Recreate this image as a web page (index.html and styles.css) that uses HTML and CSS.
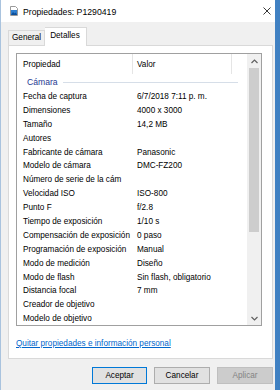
FILE: index.html
```html
<!DOCTYPE html>
<html lang="es">
<head>
    <meta charset="UTF-8">
    <meta name="viewport" content="width=device-width, initial-scale=1.0">
    <title>Propiedades: P1290419</title>
    <link rel="stylesheet" href="styles.css">
</head>
<body>

    <div class="window">
        <!-- Title bar -->
        <div class="titlebar">
            <svg class="title-icon" width="8" height="10" viewBox="0 0 8 10">
                <path d="M0.5 0.5 H5.5 L7.5 2.5 V9.5 H0.5 Z" fill="#fff" stroke="#9a9a9a"/>
                <rect x="1" y="4" width="6" height="5" fill="#2f7fd0"/>
                <path d="M1 9 L3 6 L4.5 7.5 L5.5 6.5 L7 8.5 V9 Z" fill="#0d4f9a"/>
            </svg>
            <span class="title">Propiedades: P1290419</span>
            <svg class="close" width="8" height="8" viewBox="0 0 8 8">
                <path d="M0.5 0.5 L7.5 7.5 M7.5 0.5 L0.5 7.5" stroke="#222" stroke-width="0.9"/>
            </svg>
        </div>

        <!-- Tabs -->
        <div class="tabs">
            <div class="tab">General</div>
            <div class="tab active">Detalles</div>
        </div>

        <div class="panel">
            <div class="list">
                <div class="list-body">
                    <div class="list-header">
                        <div class="col-name">Propiedad</div>
                        <div class="col-value">Valor</div>
                        <div class="col-rest"></div>
                    </div>

                    <div class="group">
                        <span class="group-title">Cámara</span>
                        <span class="group-line"></span>
                    </div>

                    <div class="row"><div class="col-name">Fecha de captura</div><div class="col-value">6/7/2018 7:11 p. m.</div></div>
                    <div class="row"><div class="col-name">Dimensiones</div><div class="col-value">4000 x 3000</div></div>
                    <div class="row"><div class="col-name">Tamaño</div><div class="col-value">14,2 MB</div></div>
                    <div class="row"><div class="col-name">Autores</div><div class="col-value"></div></div>
                    <div class="row"><div class="col-name">Fabricante de cámara</div><div class="col-value">Panasonic</div></div>
                    <div class="row"><div class="col-name">Modelo de cámara</div><div class="col-value">DMC-FZ200</div></div>
                    <div class="row"><div class="col-name">Número de serie de la cám</div><div class="col-value"></div></div>
                    <div class="row"><div class="col-name">Velocidad ISO</div><div class="col-value">ISO-800</div></div>
                    <div class="row"><div class="col-name">Punto F</div><div class="col-value">f/2.8</div></div>
                    <div class="row"><div class="col-name">Tiempo de exposición</div><div class="col-value">1/10 s</div></div>
                    <div class="row"><div class="col-name">Compensación de exposición</div><div class="col-value">0 paso</div></div>
                    <div class="row"><div class="col-name">Programación de exposición</div><div class="col-value">Manual</div></div>
                    <div class="row"><div class="col-name">Modo de medición</div><div class="col-value">Diseño</div></div>
                    <div class="row"><div class="col-name">Modo de flash</div><div class="col-value">Sin flash, obligatorio</div></div>
                    <div class="row"><div class="col-name">Distancia focal</div><div class="col-value">7 mm</div></div>
                    <div class="row"><div class="col-name">Creador de objetivo</div><div class="col-value"></div></div>
                    <div class="row"><div class="col-name">Modelo de objetivo</div><div class="col-value"></div></div>
                </div>

                <!-- Vertical scrollbar -->
                <div class="scrollbar">
                    <div class="arrow">
                        <svg width="7" height="5" viewBox="0 0 7 5"><polyline points="0.5,4 3.5,1 6.5,4" fill="none" stroke="#606060" stroke-width="1.2"/></svg>
                    </div>
                    <div class="track">
                        <div class="thumb"></div>
                    </div>
                    <div class="arrow">
                        <svg width="7" height="5" viewBox="0 0 7 5"><polyline points="0.5,1 3.5,4 6.5,1" fill="none" stroke="#606060" stroke-width="1.2"/></svg>
                    </div>
                </div>
            </div>

            <a class="remove-link" href="#">Quitar propiedades e información personal</a>
        </div>

        <!-- Dialog buttons -->
        <div class="buttons">
            <button class="btn default">Aceptar</button>
            <button class="btn">Cancelar</button>
            <button class="btn" disabled>Aplicar</button>
        </div>
    </div>

</body>
</html>
```

FILE: styles.css
```css
body {
    margin: 0;
    width: 280px;
    height: 390px;
    overflow: hidden;
    display: flex;
    background: linear-gradient(to right, #a9cbe9, #3f80c2);
    font-family: "Liberation Sans", Arial, sans-serif;
    font-size: 8.2px;
    color: #000;
}

.window {
    width: 274px;
    height: 390px;
    border-left: 1px solid #a9c3de;
    background-color: #f0f0f0;
    display: flex;
    flex-direction: column;
}

/* Title bar */
.titlebar {
    height: 22px;
    flex-shrink: 0;
    background-color: #fff;
    display: flex;
    align-items: center;
    padding-left: 9px;
}

.title-icon {
    margin-right: 5px;
}

.title {
    font-size: 8.7px;
    margin-top: 1px;
}

.close {
    margin-left: auto;
    margin-right: 4px;
}

/* Tabs */
.tabs {
    height: 23px;
    flex-shrink: 0;
    display: flex;
    align-items: flex-end;
    padding-left: 7px;
}

.tab {
    height: 14px;
    line-height: 14px;
    padding: 0 3px;
    border: 1px solid #d9d9d9;
    border-bottom: none;
    background-color: #f0f0f0;
}

.tab.active {
    height: 18px;
    line-height: 16px;
    padding: 0 6px 0 5px;
    border-left: none;
    background-color: #fff;
    margin-bottom: -1px;
    position: relative;
    z-index: 1;
}

.panel {
    height: 314px;
    flex-shrink: 0;
    margin: 0 2px 0 7px;
    border: 1px solid #d9d9d9;
    background-color: #fff;
    padding: 7px 0 0 7px;
    box-sizing: border-box;
}

/* List view */
.list {
    width: 246px;
    height: 273px;
    box-sizing: border-box;
    border: 1px solid #a0a0a0;
    display: flex;
}

.list-body {
    flex: 1;
    overflow: hidden;
}

.list-header {
    height: 20px;
    display: flex;
    align-items: stretch;
}

.list-header .col-name,
.list-header .col-value {
    border-right: 1px solid #e5e5e5;
    display: flex;
    align-items: center;
}

.list-header .col-name {
    width: 109px;
}

.list-header .col-value {
    width: 94px;
    padding-left: 4px;
}

.group {
    height: 16px;
    display: flex;
    align-items: center;
    padding: 0 9px 0 10px;
}

.group-title {
    color: #1f3a93;
    font-size: 8.6px;
}

.group-line {
    flex: 1;
    height: 1px;
    margin-left: 5px;
    background-color: #d6dee8;
}

.row {
    height: 13.9px;
    line-height: 13.9px;
    display: flex;
    white-space: nowrap;
}

.col-name {
    width: 110px;
    padding-left: 6px;
    overflow: hidden;
}

.col-value {
    padding-left: 4px;
}

/* Scrollbar */
.scrollbar {
    width: 14px;
    background-color: #f0f0f0;
    display: flex;
    flex-direction: column;
}

.arrow {
    height: 14px;
    display: flex;
    align-items: center;
    justify-content: center;
}

.track {
    flex: 1;
    padding: 0 2px;
}

.thumb {
    height: 164px;
    background-color: #cdcdcd;
}

.remove-link {
    display: block;
    margin-top: 12px;
    line-height: 11px;
    color: #0066cc;
    font-size: 8.2px;
}

/* Buttons */
.buttons {
    display: flex;
    justify-content: flex-end;
    gap: 7px;
    padding: 8px 2px 0 0;
}

.btn {
    width: 56px;
    height: 17px;
    padding: 0;
    font-family: "Liberation Sans", Arial, sans-serif;
    font-size: 8.2px;
    color: #000;
    background-color: #e1e1e1;
    border: 1px solid #adadad;
}

.btn.default {
    width: 55px;
    border-color: #0078d7;
}

.btn:disabled {
    background-color: #cccccc;
    border-color: #bfbfbf;
    color: #838383;
}
```
